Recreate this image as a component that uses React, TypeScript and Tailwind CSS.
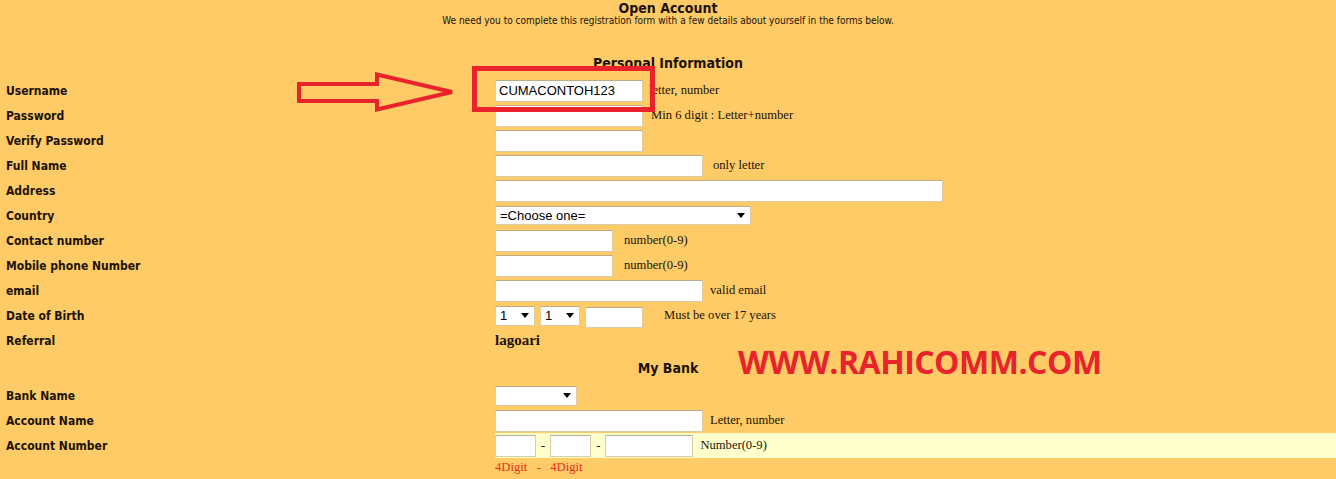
import React from "react";

// Tahoma-ish sans for labels / headings, Times-ish serif for hints
const LABEL =
  "font-['DejaVu_Sans_Condensed','DejaVu_Sans',sans-serif] [font-stretch:condensed] font-bold text-[12px] text-[#1c1208] whitespace-nowrap";
const HINT = "font-['Liberation_Serif','Times_New_Roman',serif] text-[12.6px] text-[#1c1208] whitespace-nowrap";
const FIELD =
  "bg-white border border-[#dccca6] border-t-[#bcab86] px-[3px] font-['Liberation_Sans',Arial,sans-serif] text-[13px] text-black outline-none";

function Caret() {
  return (
    <svg width="8" height="5" viewBox="0 0 8 5" className="shrink-0">
      <path d="M0 0h8L4 5z" fill="#000" />
    </svg>
  );
}

function TextBox({ width, height = "h-[22px]", value = "" }: { width: string; height?: string; value?: string }) {
  return <input readOnly value={value} className={`${FIELD} ${width} ${height}`} />;
}

function Dropdown({ width, text = "", height = "h-[20px]" }: { width: string; text?: string; height?: string }) {
  return (
    <div className={`${FIELD} ${width} ${height} flex items-center justify-between pr-[5px]`}>
      <span className="pl-[1px] leading-none">{text}</span>
      <Caret />
    </div>
  );
}

function Row({ label, children, band }: { label: string; children?: React.ReactNode; band?: boolean }) {
  return (
    <>
      <div className={`h-[25px] flex items-center pl-[6px] ${LABEL}`}>{label}</div>
      <div className={`h-[25px] flex items-center ${band ? "bg-[#ffffcc]" : ""}`}>{children}</div>
    </>
  );
}

export default function App() {
  return (
    <div className="relative min-h-screen w-full bg-[#fecb66] overflow-hidden">
      {/* Page heading */}
      <div className="flex flex-col items-center text-[#1c1208]">
        <h1 className="font-['DejaVu_Sans_Condensed','DejaVu_Sans',sans-serif] [font-stretch:condensed] font-bold text-[14px] leading-[16px]">
          Open Account
        </h1>
        <p className="font-['DejaVu_Sans_Condensed','DejaVu_Sans',sans-serif] [font-stretch:condensed] text-[10px] leading-[12px] -mt-[1px]">
          We need you to complete this registration form with a few details about yourself in the forms below.
        </p>
      </div>

      <div className="grid grid-cols-[495px_1fr] mt-[21px]">
        <div className={`col-span-2 h-[30px] flex items-center justify-center ${LABEL} text-[14px]`}>
          Personal Information
        </div>

        <Row label="Username">
          <TextBox width="w-[148px]" value="CUMACONTOH123" />
          <span className={`${HINT} ml-[6px]`}>letter, number</span>
        </Row>
        <Row label="Password">
          <TextBox width="w-[148px]" />
          <span className={`${HINT} ml-[8px]`}>Min 6 digit : Letter+number</span>
        </Row>
        <Row label="Verify Password">
          <TextBox width="w-[148px]" />
        </Row>
        <Row label="Full Name">
          <TextBox width="w-[208px]" />
          <span className={`${HINT} ml-[10px]`}>only letter</span>
        </Row>
        <Row label="Address">
          <TextBox width="w-[448px]" />
        </Row>
        <Row label="Country">
          <Dropdown width="w-[256px]" height="h-[19px]" text="=Choose one=" />
        </Row>
        <Row label="Contact number">
          <TextBox width="w-[118px]" />
          <span className={`${HINT} ml-[11px]`}>number(0-9)</span>
        </Row>
        <Row label="Mobile phone Number">
          <TextBox width="w-[118px]" />
          <span className={`${HINT} ml-[11px]`}>number(0-9)</span>
        </Row>
        <Row label="email">
          <TextBox width="w-[208px]" />
          <span className={`${HINT} ml-[7px]`}>valid email</span>
        </Row>
        <Row label="Date of Birth">
          <Dropdown width="w-[40px]" text="1" />
          <div className="ml-[5px]">
            <Dropdown width="w-[40px]" text="1" />
          </div>
          <div className="ml-[5px]">
            <TextBox width="w-[58px]" height="h-[21px]" />
          </div>
          <span className={`${HINT} ml-[21px]`}>Must be over 17 years</span>
        </Row>
        <Row label="Referral">
          <span className="font-['Liberation_Serif','Times_New_Roman',serif] font-bold text-[15px] text-[#1c1208]">
            lagoari
          </span>
        </Row>

        <div className={`col-span-2 h-[30px] flex items-center justify-center ${LABEL} text-[14px]`}>My Bank</div>

        <Row label="Bank Name">
          <Dropdown width="w-[82px]" />
        </Row>
        <Row label="Account Name">
          <TextBox width="w-[208px]" />
          <span className={`${HINT} ml-[7px]`}>Letter, number</span>
        </Row>
        <Row label="Account Number" band>
          <TextBox width="w-[41px]" />
          <span className={`${HINT} mx-[5px]`}>-</span>
          <TextBox width="w-[41px]" />
          <span className={`${HINT} mx-[5px]`}>-</span>
          <TextBox width="w-[88px]" />
          <span className={`${HINT} ml-[7px]`}>Number(0-9)</span>
        </Row>
        <div className="h-[18px]" />
        <div className="h-[18px] flex items-center font-['Liberation_Serif','Times_New_Roman',serif] text-[12.6px] text-[#e3301c] whitespace-pre">
          {"4Digit   -   4Digit"}
        </div>
      </div>

      {/* Annotation overlays: red box, arrow and watermark */}
      <svg className="absolute inset-0 pointer-events-none" width="1336" height="479">
        <rect x="474.5" y="68.5" width="178" height="41" fill="none" stroke="#e8232b" strokeWidth="5" />
        <polygon
          points="299,84 377,84 377,74.5 452,92 377,109.5 377,101 299,101"
          fill="none"
          stroke="#e8232b"
          strokeWidth="4"
          strokeLinejoin="miter"
        />
      </svg>
      <div className="absolute left-[738px] top-[346px] font-['Open_Sans',sans-serif] font-bold text-[32px] tracking-[-0.5px] leading-none text-[#e8232b] whitespace-nowrap">
        WWW.RAHICOMM.COM
      </div>
    </div>
  );
}
